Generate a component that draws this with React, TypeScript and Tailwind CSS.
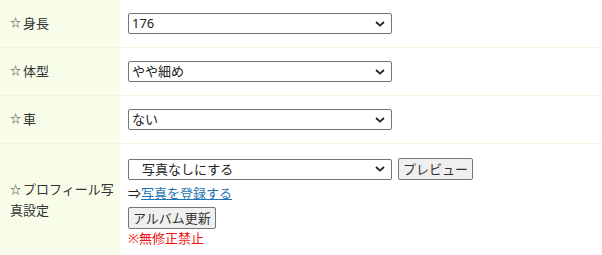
const FONT = "font-['Noto_Sans','Noto_Sans_CJK_JP',sans-serif]";

const SIMPLE_ROWS = [
  { label: "身長", value: "176" },
  { label: "体型", value: "やや細め" },
  { label: "車", value: "ない" },
];

function Star() {
  return <span className="inline-block w-[13px] text-[11px]">☆</span>;
}

function Chevron() {
  return (
    <svg
      width="10"
      height="6"
      viewBox="0 0 10 6"
      className="pointer-events-none absolute right-[7px] top-1/2 -translate-y-1/2"
    >
      <path d="M1 1l4 3.6L9 1" fill="none" stroke="#222" strokeWidth="1.8" />
    </svg>
  );
}

function Select({ value, indent = false }: { value: string; indent?: boolean }) {
  return (
    <div className="relative h-[21px] w-[264px]">
      <select
        defaultValue={value}
        className={`h-full w-full appearance-none rounded-[2px] border border-[#767676] bg-white text-[13px] leading-[19px] text-[#222] ${
          indent ? "pl-[13px]" : "pl-[3px]"
        }`}
      >
        <option>{value}</option>
      </select>
      <Chevron />
    </div>
  );
}

function Button({ children }: { children: React.ReactNode }) {
  return (
    <button className="h-[22px] rounded-[2px] border border-[#767676] bg-[#efefef] px-[4px] text-[13px] leading-[20px] text-[#333]">
      {children}
    </button>
  );
}

export default function App() {
  return (
    <div className={`${FONT} w-[602px] bg-white text-[13px] text-[#333]`}>
      {SIMPLE_ROWS.map((r) => (
        <div key={r.label} className="flex border-b border-[#eef6df]">
          <div className="flex w-[120px] shrink-0 items-center bg-[#f8fde9] pl-[10px]">
            <Star />
            {r.label}
          </div>
          <div className="flex items-center py-[13px] pl-[8px]">
            <Select value={r.value} />
          </div>
        </div>
      ))}
      <div className="flex">
        <div className="flex w-[120px] shrink-0 flex-col justify-center bg-[#f8fde9] pl-[10px] pr-[4px] leading-[21px]">
          <div>
            <Star />
            プロフィール写
          </div>
          <div>真設定</div>
        </div>
        <div className="flex flex-col items-start pb-[9px] pl-[8px] pt-[14px]">
          <div className="flex items-center gap-[6px]">
            <Select value="写真なしにする" indent />
            <Button>プレビュー</Button>
          </div>
          <div className="mt-[3px] leading-[20px] text-[#222]">
            ⇒
            <a href="#" className="text-[#1d74b4] underline">
              写真を登録する
            </a>
          </div>
          <div className="mt-[4px]">
            <Button>アルバム更新</Button>
          </div>
          <div className="leading-[18px] text-[#ee1111]">※無修正禁止</div>
        </div>
      </div>
    </div>
  );
}
